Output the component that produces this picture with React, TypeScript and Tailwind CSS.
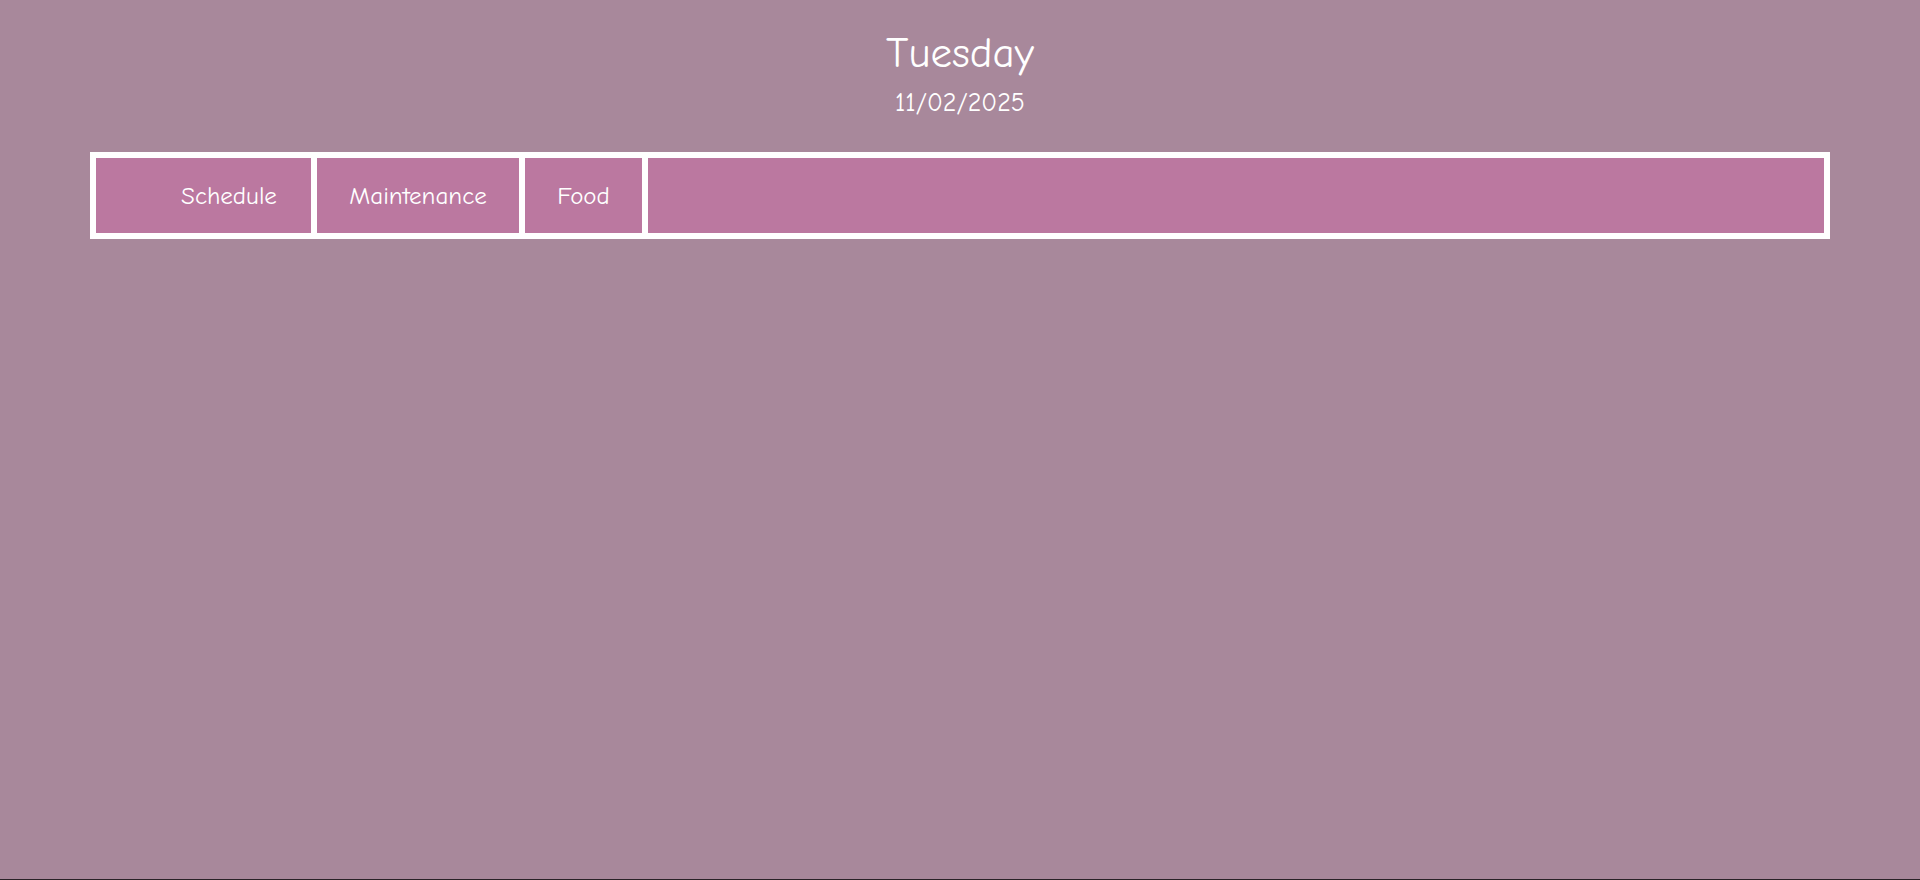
const tabs = [
  { label: "Schedule", width: "w-[215px]", pad: "pl-[83px] pr-[32px]" },
  { label: "Maintenance", width: "w-[202px]", pad: "px-[32px]" },
  { label: "Food", width: "w-[117px]", pad: "px-[32px]" },
]

export default function App() {
  return (
    <div className="min-h-[880px] bg-[#a8889b] flex flex-col font-['Comic_Sans_MS','Comic_Neue','Noto_Sans',sans-serif] text-white">
      <header className="flex flex-col items-center pt-[28px]">
        <h1 className="text-[43px] leading-[50px]">Tuesday</h1>
        <p className="text-[26px] leading-[30px] mt-[10px]">11/02/2025</p>
      </header>

      <nav className="mx-auto mt-[34px] w-[1740px] bg-white p-[6px] flex gap-[6px]">
        {tabs.map((t) => (
          <div
            key={t.label}
            className={`${t.width} ${t.pad} flex-none h-[75px] bg-[#bb78a0] flex items-center justify-center text-[25px] whitespace-nowrap`}
          >
            {t.label}
          </div>
        ))}
        <div className="flex-1 h-[75px] bg-[#bb78a0]" />
      </nav>

      <div className="flex-1" />
      <div className="h-px bg-[#2a2328]" />
    </div>
  )
}
